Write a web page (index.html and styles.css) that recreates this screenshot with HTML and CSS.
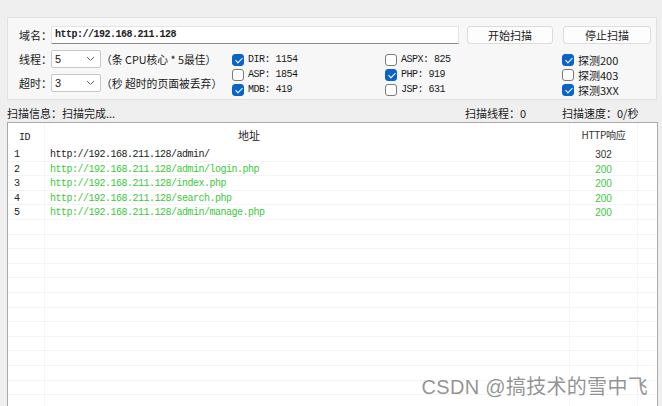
FILE: index.html
```html
<!DOCTYPE html>
<html>
<head>
<meta charset="utf-8">
<link rel="stylesheet" href="styles.css">
</head>
<body>
<div class="app">
  <div class="topstrip"></div>
  <div class="group">
    <div class="row1">
      <span class="lbl">域名：</span>
      <div class="input mono">http://192.168.211.128</div>
      <div class="btn">开始扫描</div>
      <div class="btn btn2">停止扫描</div>
    </div>
    <div class="row2">
      <div class="opts">
        <div class="opt">
          <span class="lbl">线程：</span>
          <div class="select"><span>5</span><svg width="9" height="6" viewBox="0 0 9 6"><path d="M1 1 L4.5 4.5 L8 1" fill="none" stroke="#666" stroke-width="1"/></svg></div>
          <span class="hint">（条 CPU核心 * 5最佳）</span>
        </div>
        <div class="opt">
          <span class="lbl">超时：</span>
          <div class="select"><span>3</span><svg width="9" height="6" viewBox="0 0 9 6"><path d="M1 1 L4.5 4.5 L8 1" fill="none" stroke="#666" stroke-width="1"/></svg></div>
          <span class="hint">（秒 超时的页面被丢弃）</span>
        </div>
      </div>
      <div class="checks c1">
        <div class="chk"><span class="box on"></span><span class="mono">DIR: 1154</span></div>
        <div class="chk"><span class="box"></span><span class="mono">ASP: 1854</span></div>
        <div class="chk"><span class="box on"></span><span class="mono">MDB: 419</span></div>
      </div>
      <div class="checks c2">
        <div class="chk"><span class="box"></span><span class="mono">ASPX: 825</span></div>
        <div class="chk"><span class="box on"></span><span class="mono">PHP: 919</span></div>
        <div class="chk"><span class="box"></span><span class="mono">JSP: 631</span></div>
      </div>
      <div class="checks c3">
        <div class="chk"><span class="box on"></span><span class="cjk">探测200</span></div>
        <div class="chk"><span class="box"></span><span class="cjk">探测403</span></div>
        <div class="chk"><span class="box on"></span><span class="cjk">探测3XX</span></div>
      </div>
    </div>
  </div>
  <div class="status">
    <span>扫描信息：扫描完成...</span>
    <span>扫描线程：0</span>
    <span>扫描速度：0/秒</span>
  </div>
  <div class="list">
    <div class="tr head">
      <div class="td id mono">ID</div>
      <div class="td addr addrh">地址</div>
      <div class="td code">HTTP响应</div>
      <div class="td"></div>
    </div>
    <div class="tr"><div class="td id mono">1</div><div class="td addr mono">http://192.168.211.128/admin/</div><div class="td code">302</div><div class="td"></div></div>
    <div class="tr ok"><div class="td id mono">2</div><div class="td addr mono">http://192.168.211.128/admin/login.php</div><div class="td code">200</div><div class="td"></div></div>
    <div class="tr ok"><div class="td id mono">3</div><div class="td addr mono">http://192.168.211.128/index.php</div><div class="td code">200</div><div class="td"></div></div>
    <div class="tr ok"><div class="td id mono">4</div><div class="td addr mono">http://192.168.211.128/search.php</div><div class="td code">200</div><div class="td"></div></div>
    <div class="tr ok"><div class="td id mono">5</div><div class="td addr mono">http://192.168.211.128/admin/manage.php</div><div class="td code">200</div><div class="td"></div></div>
    <div class="tr"><div class="td id"></div><div class="td addr"></div><div class="td code"></div><div class="td"></div></div>
    <div class="tr"><div class="td id"></div><div class="td addr"></div><div class="td code"></div><div class="td"></div></div>
    <div class="tr"><div class="td id"></div><div class="td addr"></div><div class="td code"></div><div class="td"></div></div>
    <div class="tr"><div class="td id"></div><div class="td addr"></div><div class="td code"></div><div class="td"></div></div>
    <div class="tr"><div class="td id"></div><div class="td addr"></div><div class="td code"></div><div class="td"></div></div>
    <div class="tr"><div class="td id"></div><div class="td addr"></div><div class="td code"></div><div class="td"></div></div>
    <div class="tr"><div class="td id"></div><div class="td addr"></div><div class="td code"></div><div class="td"></div></div>
    <div class="tr"><div class="td id"></div><div class="td addr"></div><div class="td code"></div><div class="td"></div></div>
    <div class="tr"><div class="td id"></div><div class="td addr"></div><div class="td code"></div><div class="td"></div></div>
    <div class="tr"><div class="td id"></div><div class="td addr"></div><div class="td code"></div><div class="td"></div></div>
    <div class="tr"><div class="td id"></div><div class="td addr"></div><div class="td code"></div><div class="td"></div></div>
    <div class="tr"><div class="td id"></div><div class="td addr"></div><div class="td code"></div><div class="td"></div></div>
    <div class="tr"><div class="td id"></div><div class="td addr"></div><div class="td code"></div><div class="td"></div></div>
  </div>
  <div class="watermark">CSDN @搞技术的雪中飞</div>
</div>
</body>
</html>
```
FILE: styles.css
```css
* { box-sizing: border-box; }
html, body { margin: 0; padding: 0; }
body {
  width: 662px;
  height: 406px;
  overflow: hidden;
  background: #efefef;
  font-family: "Noto Sans CJK SC", sans-serif;
  font-size: 11px;
  color: #1a1a1a;
}
.app { position: relative; width: 662px; height: 406px; }
.mono {
  font-family: "Liberation Mono", "Noto Sans CJK SC", monospace;
  font-size: 10px;
  letter-spacing: -0.5px;
}
.cjk { font-family: "Noto Sans CJK SC", sans-serif; font-size: 11px; }
.topstrip { height: 17px; }
.group {
  margin-left: 7px;
  width: 650px;
  height: 83px;
  border: 1px solid #e2e2e2;
  background: #f7f7f7;
  padding: 8px 0 0 11px;
}
.row1 { display: flex; align-items: center; height: 18px; }
.lbl { width: 32px; flex: none; line-height: 18px; white-space: nowrap; }
.input {
  width: 408px;
  height: 18px;
  background: #fff;
  border: 1px solid #e4e4e4;
  border-bottom: 1px solid #8a8a8a;
  padding-left: 3px;
  line-height: 16px;
  font-weight: bold;
  color: #222;
}
.btn {
  margin-left: 8px;
  width: 86px;
  height: 18px;
  background: #fdfdfd;
  border: 1px solid #dcdcdc;
  border-radius: 3px;
  text-align: center;
  line-height: 16px;
  font-size: 11px;
  color: #1a1a1a;
}
.btn2 { margin-left: 10px; width: 88px; }
.row2 { display: flex; margin-top: 6px; }
.opts { width: 213px; display: flex; flex-direction: column; gap: 6px; }
.opt { display: flex; align-items: center; height: 18px; }
.select {
  width: 50px;
  height: 18px;
  flex: none;
  background: #fff;
  border: 1px solid #c8c8c8;
  border-radius: 2px;
  display: flex;
  align-items: center;
  justify-content: space-between;
  padding: 0 5px 0 3px;
  font-family: "Liberation Sans", sans-serif;
  font-size: 11px;
}
.hint { margin-left: 0; line-height: 18px; white-space: nowrap; font-size: 10.8px; }
.checks { margin-top: 2px; display: flex; flex-direction: column; }
.c1 { width: 153px; }
.c2 { width: 177px; }
.chk { display: flex; align-items: center; height: 15px; }
.box {
  width: 12px;
  height: 12px;
  border: 1px solid #7a7a7a;
  border-radius: 3px;
  background: #fff;
  margin-right: 4px;
  flex: none;
  position: relative;
}
.box.on { background: #0a64c8; border-color: #0a64c8; }
.box.on::after {
  content: "";
  position: absolute;
  left: 3.5px;
  top: 1px;
  width: 3px;
  height: 6px;
  border-right: 1.3px solid #fff;
  border-bottom: 1.3px solid #fff;
  transform: rotate(45deg);
}
.status {
  height: 22px;
  display: grid;
  grid-template-columns: 458px 97px 1fr;
  padding-left: 7px;
  padding-top: 6px;
  line-height: 14px;
  font-size: 11px;
  white-space: nowrap;
}
.list {
  margin-left: 7px;
  width: 651px;
  height: 300px;
  background: #fff;
  border: 1px solid #a9a9a9;
  border-bottom: none;
}
.tr {
  display: grid;
  grid-template-columns: 37px 525px 68px 1fr;
  height: 14.6px;
  border-bottom: 1px solid #f4f4f4;
  line-height: 15px;
}
.tr.head { height: 24px; line-height: 24px; border-bottom: none; }
.td { border-right: 1px solid #f6f6f6; white-space: nowrap; overflow: hidden; }
.td:last-child { border-right: none; }
.id { padding-left: 6px; color: #222; }
.head .id { padding-left: 11px; padding-top: 3px; }
.addr { padding-left: 5px; color: #222; }
.addrh { padding-left: 193px; font-size: 11px; }
.code { text-align: center; font-family: "Liberation Sans", sans-serif; font-size: 10px; color: #333; }
.head .code { font-family: "Noto Sans CJK SC", sans-serif; font-size: 10px; letter-spacing: -0.3px; }
.ok .addr, .ok .code { color: #3cc83c; }
.watermark {
  position: absolute;
  right: 14px;
  bottom: 8px;
  font-family: "Liberation Sans", "Noto Sans CJK SC", sans-serif;
  font-size: 20px;
  color: rgba(100, 100, 100, 0.7);
  line-height: 22px;
  letter-spacing: 0.3px;
}
```
